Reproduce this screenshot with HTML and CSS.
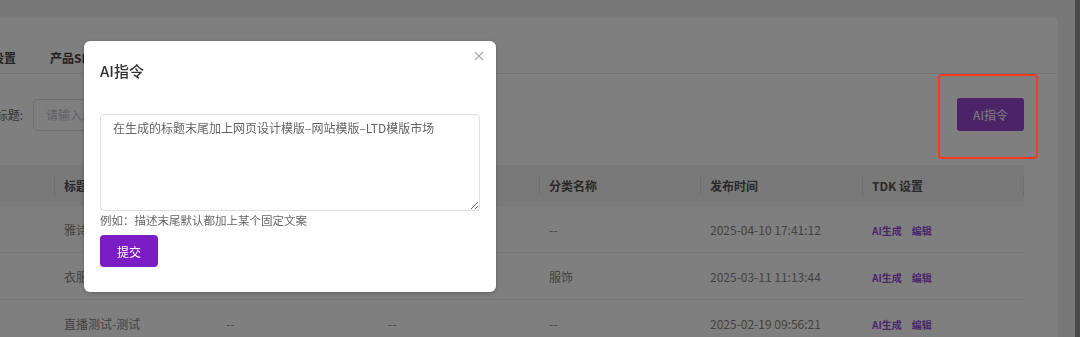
FILE: index.html
```html
<!DOCTYPE html>
<html lang="zh-CN">
<head>
<meta charset="utf-8">
<title>AI指令</title>
<link rel="stylesheet" href="styles.css">
</head>
<body>
<div class="page">
  <main class="main">
    <section class="card">
      <nav class="tabs">
        <span class="tab">站点设置</span>
        <span class="tab">产品SEO设置</span>
        <span class="tab">文章SEO设置</span>
        <span class="tab">分类SEO设置</span>
      </nav>
      <div class="filter">
        <div class="form-item">
          <label class="form-label">产品标题:</label>
          <div class="input">请输入产品标题</div>
        </div>
        <button class="btn-ai">AI指令</button>
      </div>
      <div class="table">
        <div class="tr thead">
          <div class="th"></div>
          <div class="th">标题</div>
          <div class="th">关键词</div>
          <div class="th">描述</div>
          <div class="th">分类名称</div>
          <div class="th">发布时间</div>
          <div class="th">TDK 设置</div>
        </div>
        <div class="tr row">
          <div class="td"></div>
          <div class="td">雅诗兰黛精华液</div>
          <div class="td">--</div>
          <div class="td">--</div>
          <div class="td">--</div>
          <div class="td">2025-04-10 17:41:12</div>
          <div class="td"><span class="link">AI生成</span><span class="link">编辑</span></div>
        </div>
        <div class="tr row">
          <div class="td"></div>
          <div class="td">衣服测试</div>
          <div class="td">--</div>
          <div class="td">--</div>
          <div class="td">服饰</div>
          <div class="td">2025-03-11 11:13:44</div>
          <div class="td"><span class="link">AI生成</span><span class="link">编辑</span></div>
        </div>
        <div class="tr row">
          <div class="td"></div>
          <div class="td">直播测试-测试</div>
          <div class="td">--</div>
          <div class="td">--</div>
          <div class="td">--</div>
          <div class="td">2025-02-19 09:56:21</div>
          <div class="td"><span class="link">AI生成</span><span class="link">编辑</span></div>
        </div>
      </div>
    </section>
  </main>
  <div class="scrollbar"></div>
</div>

<div class="mask"></div>

<div class="dialog">
  <div class="dialog-title">AI指令</div>
  <svg class="dialog-close" width="10" height="10" viewBox="0 0 10 10">
    <path d="M1 1L9 9M9 1L1 9" stroke="#a8abb2" stroke-width="1.2" fill="none"/>
  </svg>
  <div class="dialog-body">
    <textarea class="textarea">在生成的标题末尾加上网页设计模版–网站模版–LTD模版市场</textarea>
    <div class="hint">例如：描述末尾默认都加上某个固定文案</div>
    <button class="btn-submit">提交</button>
  </div>
</div>

<div class="annot"></div>
</body>
</html>
```

FILE: styles.css
```css
* { box-sizing: border-box; }

html, body {
  margin: 0;
  height: 100%;
  overflow: hidden;
}

body {
  font-family: "Noto Sans CJK SC", "Noto Sans", sans-serif;
  font-size: 12px;
  background: #f0f1f3;
  color: #333;
}

.page {
  display: flex;
  height: 337px;
}

.main {
  flex: 1;
  padding: 17px 17px 0 0;
  overflow: hidden;
}

.scrollbar {
  width: 5px;
  background: #959595;
}

.card {
  background: #fff;
  border-radius: 0 4px 0 0;
  height: 100%;
  padding: 0 34px 0 0;
}

/* tabs */
.tabs {
  display: flex;
  gap: 34px;
  margin: 0 -32px 0 -32px;
  padding: 31px 0 5px;
  border-bottom: 1px solid #e4e7ed;
}

.tab {
  font-weight: 600;
  line-height: 20px;
  color: #444;
  white-space: nowrap;
}

/* filter */
.filter {
  margin-top: 24px;
  height: 33px;
  display: flex;
  align-items: center;
  justify-content: space-between;
}

.form-item {
  display: flex;
  align-items: center;
  margin-left: -47px;
}

.form-label {
  width: 80px;
  padding-right: 10px;
  text-align: right;
  color: #666;
}

.input {
  width: 220px;
  height: 32px;
  border: 1px solid #dcdfe6;
  border-radius: 4px;
  padding: 0 12px;
  line-height: 30px;
  color: #c0c4cc;
}

.btn-ai {
  width: 67px;
  height: 33px;
  border: none;
  border-radius: 3px;
  background: #9a46d0;
  color: #fff;
  font-family: inherit;
  font-size: 12px;
  padding: 0;
}

/* table */
.table {
  margin-top: 34px;
}

.tr {
  display: grid;
  grid-template-columns: 54px 162px 162px 161px 161px 162px 162px;
  align-items: center;
}

.thead {
  height: 41px;
  background: #f3f3f3;
}

.th {
  position: relative;
  padding: 0 10px;
  line-height: 20px;
  font-weight: 600;
  color: #555;
  white-space: nowrap;
}

.th + .th::before {
  content: "";
  position: absolute;
  left: 0;
  top: 0;
  width: 1px;
  height: 20px;
  background: #dcdcdc;
}

.th:last-child::after {
  content: "";
  position: absolute;
  right: 0;
  top: 0;
  width: 1px;
  height: 20px;
  background: #dcdcdc;
}

.row {
  height: 47px;
  border-bottom: 1px solid #ebeef5;
}

.td {
  padding: 0 10px;
  color: #858585;
  white-space: nowrap;
  overflow: hidden;
}

.link {
  font-size: 10px;
  font-weight: 600;
  color: #9450d8;
  margin-right: 10px;
}

/* modal */
.mask {
  position: fixed;
  inset: 0;
  background: rgba(0, 0, 0, 0.5);
}

.dialog {
  position: absolute;
  left: 84px;
  top: 41px;
  width: 412px;
  background: #fff;
  border-radius: 6px;
  padding: 18px 16px 25px;
  box-shadow: 0 1px 4px rgba(0, 0, 0, 0.25);
}

.dialog-title {
  font-size: 15px;
  font-weight: 500;
  line-height: 24px;
  color: #303133;
}

.dialog-close {
  position: absolute;
  left: 390px;
  top: 10px;
}

.dialog-body {
  margin-top: 31px;
  display: flex;
  flex-direction: column;
  align-items: flex-start;
}

.textarea {
  display: block;
  width: 100%;
  height: 97px;
  margin: 0;
  border: 1px solid #dcdfe6;
  border-radius: 4px;
  padding: 4px 12px;
  font-family: inherit;
  font-size: 12px;
  line-height: 18px;
  color: #606266;
  resize: vertical;
  outline: none;
}

.hint {
  font-size: 11.5px;
  line-height: 18px;
  color: #666;
}

.btn-submit {
  margin-top: 6px;
  width: 58px;
  height: 32px;
  border: none;
  border-radius: 4px;
  background: #7c1cc4;
  color: #fff;
  font-family: inherit;
  font-size: 12px;
  padding: 0;
}

/* red annotation box */
.annot {
  position: absolute;
  left: 938px;
  top: 74px;
  width: 100px;
  height: 85px;
  border: 2px solid #f93a1e;
  border-radius: 4px;
}
```
